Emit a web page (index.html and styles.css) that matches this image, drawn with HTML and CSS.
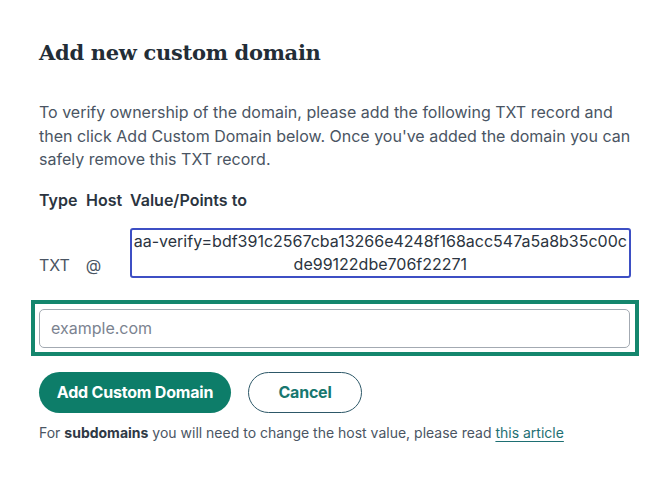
FILE: index.html
```html
<!DOCTYPE html>
<html lang="en">
<head>
    <meta charset="UTF-8">
    <meta name="viewport" content="width=device-width, initial-scale=1.0">
    <title>Add new custom domain</title>
    <link rel="stylesheet" href="styles.css">
</head>
<body>
    <div class="modal">
        <h2 class="modal-title">Add new custom domain</h2>

        <p class="intro">To verify ownership of the domain, please add the following TXT record and then click Add Custom Domain below. Once you've added the domain you can safely remove this TXT record.</p>

        <div class="record-head">
            <span class="col-type">Type</span>
            <span class="col-host">Host</span>
            <span>Value/Points to</span>
        </div>
        <div class="record-row">
            <span class="col-type">TXT</span>
            <span class="col-host">@</span>
            <div class="record-value">aa-verify=bdf391c2567cba13266e4248f168acc547a5a8b35c00cde99122dbe706f22271</div>
        </div>

        <div class="domain-field">
            <input type="text" class="domain-input" placeholder="example.com">
        </div>

        <div class="actions">
            <button class="btn btn-primary">Add Custom Domain</button>
            <button class="btn btn-outline">Cancel</button>
        </div>

        <p class="note">For <strong>subdomains</strong> you will need to change the host value, please read <a href="#">this article</a></p>
    </div>
</body>
</html>
```

FILE: styles.css
```css
body {
    margin: 0;
    background-color: #fff;
    font-family: Inter, 'Noto Sans', sans-serif;
    color: #4a5563;
}
.modal {
    padding: 35px 39px 20px 39px;
}
.modal-title {
    margin: 0 0 30px 0;
    font-family: 'DejaVu Serif', 'Liberation Serif', serif;
    font-size: 21px;
    font-weight: bold;
    letter-spacing: -0.3px;
    color: #232d36;
    line-height: 36px;
}
.intro {
    margin: 0 0 16px 0;
    font-size: 16px;
    line-height: 23.5px;
    color: #4a5563;
}
.record-head {
    display: flex;
    font-size: 16px;
    font-weight: 600;
    color: #2b3440;
    line-height: 24px;
    margin-bottom: 16px;
}
.col-type {
    width: 47px;
}
.col-host {
    width: 44px;
}
.record-row {
    display: flex;
    align-items: flex-end;
    font-size: 16px;
    line-height: 23px;
    color: #4a5563;
}
.record-row .col-type,
.record-row .col-host {
    margin-bottom: 1px;
}
.record-value {
    width: 499px;
    border: 2px solid #3d4fc4;
    border-radius: 3px;
    text-align: center;
    word-break: break-all;
    color: #2b3440;
    padding: 0;
}
.domain-field {
    margin: 22px -8px 0 -8px;
    border: 4px solid #14866d;
    padding: 5px 5px 4px 4px;
}
.domain-input {
    display: block;
    width: 100%;
    box-sizing: border-box;
    height: 39px;
    padding: 0 11px;
    border: 1px solid #a3aab2;
    border-radius: 5px;
    font-family: Inter, sans-serif;
    font-size: 16px;
    color: #2b3440;
}
.domain-input::placeholder {
    color: #7b8390;
}
.actions {
    display: flex;
    gap: 17px;
    margin-top: 16px;
}
.btn {
    height: 41px;
    border-radius: 21px;
    font-family: Inter, sans-serif;
    font-size: 16px;
    font-weight: bold;
    letter-spacing: -0.2px;
    cursor: pointer;
}
.btn-primary {
    width: 192px;
    background-color: #0d7d69;
    color: #fff;
    border: none;
}
.btn-outline {
    width: 114px;
    background-color: #fff;
    color: #17776f;
    border: 1px solid #2d5868;
}
.note {
    margin: 10px 0 0 0;
    font-size: 14px;
    line-height: 20px;
    color: #4a5563;
}
.note strong {
    color: #2f3945;
}
.note a {
    color: #1e6f73;
    text-decoration: underline;
    text-underline-offset: 3px;
}
```
